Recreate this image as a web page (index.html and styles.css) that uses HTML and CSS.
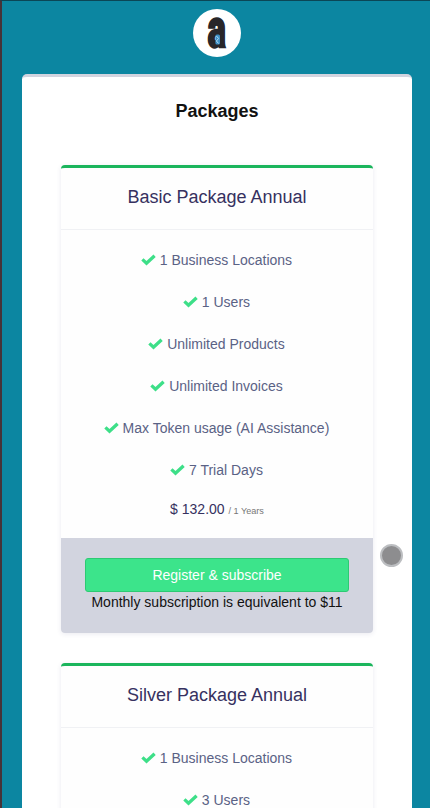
FILE: index.html
```
<!DOCTYPE html>
<html lang="en">
<head>
  <meta charset="UTF-8">
  <meta name="viewport" content="width=device-width, initial-scale=1">
  <title>Packages</title>
  <link rel="stylesheet" href="styles.css">
</head>

<body>
  <svg class="icon-defs" width="0" height="0">
    <symbol id="check" viewBox="0 0 15 12">
      <path d="M1.4 5.4 L5.5 9.2 L13.6 1.7" fill="none" stroke="currentColor" stroke-width="3.3"/>
    </symbol>
  </svg>

  <div class="page">
    <div class="logo">
      <svg width="48" height="48" viewBox="0 0 48 48">
        <text class="logo-letter" transform="translate(14.8 38.2) scale(0.65 1)" x="0" y="0">a</text>
        <rect x="22.4" y="25.5" width="4.6" height="10" rx="1.5" fill="#3d8fc4"/>
        <path d="M23.4 27 L25.6 29.5 L23.4 32 L25.6 34.5" fill="none" stroke="#b9dcf0" stroke-width="1"/>
      </svg>
    </div>

    <div class="panel">
      <h3 class="panel-title">Packages</h3>

      <div class="card">
        <div class="card-header">Basic Package Annual</div>
        <div class="card-body">
          <div class="feature"><svg class="check"><use href="#check"/></svg> 1 Business Locations</div>
          <div class="feature"><svg class="check"><use href="#check"/></svg> 1 Users</div>
          <div class="feature"><svg class="check"><use href="#check"/></svg> Unlimited Products</div>
          <div class="feature"><svg class="check"><use href="#check"/></svg> Unlimited Invoices</div>
          <div class="feature"><svg class="check"><use href="#check"/></svg> Max Token usage (AI Assistance)</div>
          <div class="feature"><svg class="check"><use href="#check"/></svg> 7 Trial Days</div>
          <div class="price">$ 132.00 <small>/ 1 Years</small></div>
        </div>
        <div class="card-footer">
          <a class="btn" href="#">Register &amp; subscribe</a>
          Monthly subscription is equivalent to $11
        </div>
      </div>

      <div class="card">
        <div class="card-header">Silver Package Annual</div>
        <div class="card-body">
          <div class="feature"><svg class="check"><use href="#check"/></svg> 1 Business Locations</div>
          <div class="feature"><svg class="check"><use href="#check"/></svg> 3 Users</div>
        </div>
      </div>
    </div>
  </div>

  <div class="pointer"></div>
</body>
</html>
```
FILE: styles.css
```
* {
  box-sizing: border-box;
}
body {
  margin: 0;
  height: 808px;
  overflow: hidden;
  font-family: "Liberation Sans", Arial, sans-serif;
  font-size: 14px;
  line-height: 20px;
  color: #111;
}
.icon-defs {
  position: absolute;
}
.page {
  height: 808px;
  overflow: hidden;
  padding: 8px 18px 0 20px;
  background-color: #0c86a1;
  border-left: 2px solid #463338;
  border-top: 1px solid #0b4656;
}

.logo {
  width: 48px;
  height: 48px;
  margin: 0 auto 17px;
  border-radius: 50%;
  background-color: #fff;
}
.logo svg {
  display: block;
  overflow: visible;
}
.logo-letter {
  font-family: Roboto, "Liberation Sans", sans-serif;
  font-size: 52px;
  font-weight: 900;
  fill: #282629;
  stroke: #282629;
  stroke-width: 2.4;
}

.panel {
  height: 760px;
  padding: 24px 39px 0;
  background-color: #fff;
  border-top: 3px solid #d2d4df;
  border-radius: 5px 5px 0 0;
}
.panel-title {
  margin: 0 0 44px;
  font-size: 18px;
  line-height: 20px;
  text-align: center;
}

.card {
  margin-bottom: 30px;
  border-top: 3px solid #1bb55c;
  border-radius: 4px;
  background-color: #fefefe;
  box-shadow: 0 1px 5px rgba(60, 60, 120, 0.11);
  text-align: center;
  overflow: hidden;
}
.card-header {
  height: 62px;
  padding-top: 19px;
  border-bottom: 1px solid #f0f1f4;
  font-size: 18px;
  color: #363160;
}
.card-body {
  padding: 20px 10px 17px;
}
.feature {
  margin-bottom: 22px;
  color: #5a6285;
}
.check {
  width: 15px;
  height: 12px;
  margin-left: -1px;
  vertical-align: -1px;
  color: #3ddf88;
}
.price {
  margin-top: -3px;
  color: #363160;
}
.price small {
  font-size: 9.1px;
  color: #777;
}
.card-footer {
  height: 95px;
  padding: 20px 24px;
  background-color: #d2d4df;
}
.btn {
  display: block;
  height: 34px;
  padding: 6px 12px;
  border: 1px solid #2dca73;
  border-radius: 3px;
  background-color: #3ce48b;
  color: #fff;
  text-decoration: none;
}

/* touch pointer, floats over the page */
.pointer {
  position: absolute;
  left: 380px;
  top: 544px;
  width: 23px;
  height: 23px;
  border: 2px solid #bcbec1;
  border-radius: 50%;
  background-color: #8d8d8f;
}
```
